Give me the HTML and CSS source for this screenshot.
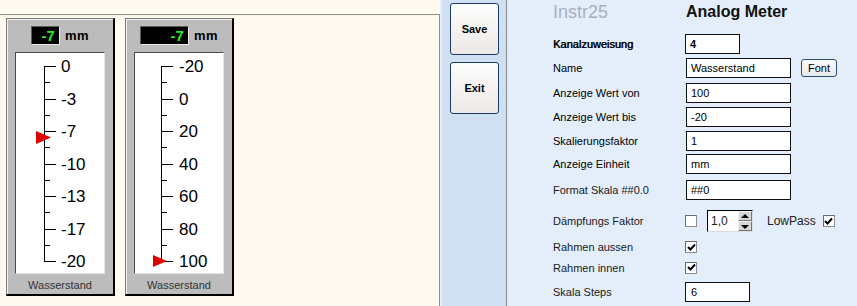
FILE: index.html
```html
<!DOCTYPE html>
<html lang="de">

<head>
    <meta charset="UTF-8">
    <title>Analog Meter</title>
    <link rel="stylesheet" href="styles.css">
</head>

<body>
    <div class="canvas">
        <div class="stage">
            <!-- Meter 1 -->
            <div class="meter">
                <div class="head">
                    <span class="display short">-7</span>
                    <span class="unit">mm</span>
                </div>
                <div class="scale">
                    <svg width="88" height="220" viewBox="0 0 88 220">
                        <g stroke="#000" stroke-width="1" shape-rendering="crispEdges">
                            <line x1="28" y1="13" x2="28" y2="208" />
                            <line x1="28" y1="13" x2="40" y2="13" />
                            <line x1="28" y1="29" x2="34" y2="29" />
                            <line x1="28" y1="46" x2="40" y2="46" />
                            <line x1="28" y1="62" x2="34" y2="62" />
                            <line x1="28" y1="78" x2="40" y2="78" />
                            <line x1="28" y1="94" x2="34" y2="94" />
                            <line x1="28" y1="111" x2="40" y2="111" />
                            <line x1="28" y1="127" x2="34" y2="127" />
                            <line x1="28" y1="143" x2="40" y2="143" />
                            <line x1="28" y1="159" x2="34" y2="159" />
                            <line x1="28" y1="176" x2="40" y2="176" />
                            <line x1="28" y1="192" x2="34" y2="192" />
                            <line x1="28" y1="208" x2="40" y2="208" />
                        </g>
                        <g class="lbl">
                            <text x="45" y="19">0</text>
                            <text x="45" y="52">-3</text>
                            <text x="45" y="84">-7</text>
                            <text x="45" y="117">-10</text>
                            <text x="45" y="149">-13</text>
                            <text x="45" y="182">-17</text>
                            <text x="45" y="214">-20</text>
                        </g>
                        <polygon points="20,78 20,91 35,84.5" fill="#e00000" />
                    </svg>
                </div>
                <div class="caption">Wasserstand</div>
            </div>

            <!-- Meter 2 -->
            <div class="meter">
                <div class="head">
                    <span class="display wide">-7</span>
                    <span class="unit">mm</span>
                </div>
                <div class="scale">
                    <svg width="88" height="220" viewBox="0 0 88 220">
                        <g stroke="#000" stroke-width="1" shape-rendering="crispEdges">
                            <line x1="26" y1="13" x2="26" y2="208" />
                            <line x1="26" y1="13" x2="38" y2="13" />
                            <line x1="26" y1="29" x2="32" y2="29" />
                            <line x1="26" y1="46" x2="38" y2="46" />
                            <line x1="26" y1="62" x2="32" y2="62" />
                            <line x1="26" y1="78" x2="38" y2="78" />
                            <line x1="26" y1="94" x2="32" y2="94" />
                            <line x1="26" y1="111" x2="38" y2="111" />
                            <line x1="26" y1="127" x2="32" y2="127" />
                            <line x1="26" y1="143" x2="38" y2="143" />
                            <line x1="26" y1="159" x2="32" y2="159" />
                            <line x1="26" y1="176" x2="38" y2="176" />
                            <line x1="26" y1="192" x2="32" y2="192" />
                            <line x1="26" y1="208" x2="38" y2="208" />
                        </g>
                        <g class="lbl">
                            <text x="44" y="19">-20</text>
                            <text x="44" y="52">0</text>
                            <text x="44" y="84">20</text>
                            <text x="44" y="117">40</text>
                            <text x="44" y="149">60</text>
                            <text x="44" y="182">80</text>
                            <text x="44" y="214">100</text>
                        </g>
                        <polygon points="18,202 18,214 32,208" fill="#e00000" />
                    </svg>
                </div>
                <div class="caption">Wasserstand</div>
            </div>
        </div>
    </div>

    <div class="sidebar">
        <button class="side-btn">Save</button>
        <button class="side-btn">Exit</button>
    </div>

    <div class="panel">
        <div class="row title-row">
            <span class="instr">Instr25</span>
            <span class="kind">Analog Meter</span>
        </div>
        <div class="row r-kanal">
            <label class="strong">Kanalzuweisung</label>
            <div class="field short-field bold">4</div>
        </div>
        <div class="row r-name">
            <label>Name</label>
            <div class="field">Wasserstand</div>
            <button class="font-btn">Font</button>
        </div>
        <div class="row r-von">
            <label>Anzeige Wert von</label>
            <div class="field">100</div>
        </div>
        <div class="row r-bis">
            <label>Anzeige Wert bis</label>
            <div class="field">-20</div>
        </div>
        <div class="row r-skal">
            <label>Skalierungsfaktor</label>
            <div class="field">1</div>
        </div>
        <div class="row r-einheit">
            <label>Anzeige Einheit</label>
            <div class="field">mm</div>
        </div>
        <div class="row r-format">
            <label class="light">Format Skala ##0.0</label>
            <div class="field">##0</div>
        </div>
        <div class="row r-daempf">
            <label class="light">Dämpfungs Faktor</label>
            <span class="check"></span>
            <div class="spinner">
                <span class="spin-val">1,0</span>
                <span class="spin-btns">
                    <span class="spin-up"></span>
                    <span class="spin-down"></span>
                </span>
            </div>
            <span class="lowpass">LowPass</span>
            <span class="check on">
                <svg width="9" height="9" viewBox="0 0 9 9"><path d="M1 4 L3.5 6.5 L8 1.5" fill="none" stroke="#000" stroke-width="2" /></svg>
            </span>
        </div>
        <div class="row r-aussen">
            <label class="light">Rahmen aussen</label>
            <span class="check on">
                <svg width="9" height="9" viewBox="0 0 9 9"><path d="M1 4 L3.5 6.5 L8 1.5" fill="none" stroke="#000" stroke-width="2" /></svg>
            </span>
        </div>
        <div class="row r-innen">
            <label class="light">Rahmen innen</label>
            <span class="check on">
                <svg width="9" height="9" viewBox="0 0 9 9"><path d="M1 4 L3.5 6.5 L8 1.5" fill="none" stroke="#000" stroke-width="2" /></svg>
            </span>
        </div>
        <div class="row r-steps">
            <label class="light">Skala Steps</label>
            <div class="field steps-field">6</div>
        </div>
    </div>
</body>

</html>
```

FILE: styles.css
```css
body {
    margin: 0;
    width: 857px;
    height: 306px;
    overflow: hidden;
    display: flex;
    font-family: "Liberation Sans", Arial, sans-serif;
    font-size: 11px;
    color: #000;
}

/* left drawing area */
.canvas {
    width: 440px;
    padding-top: 14px;
    background: #fffaf0;
    border-right: 2px solid #e6eef8;
}

.stage {
    height: 291px;
    border-top: 1px solid #8c8c8c;
    border-right: 1px solid #8c8c8c;
    display: flex;
    gap: 10px;
    padding: 3px 0 0 6px;
}

.meter {
    width: 106px;
    height: 275px;
    background: #bcbcbc;
    border: 1px solid #7a7a7a;
    border-right: 2px solid #000;
    border-bottom: 2px solid #000;
    box-shadow: inset 1px 1px 0 #f2f2f2;
    display: flex;
    flex-direction: column;
    align-items: center;
}

.head {
    display: flex;
    align-items: center;
    gap: 5px;
    margin-top: 7px;
    height: 19px;
}

.display {
    height: 19px;
    box-sizing: border-box;
    background: #000;
    border: 1px solid #5c5c5c;
    border-right-color: #e8e8e8;
    border-bottom-color: #e8e8e8;
    color: #2ee82e;
    font-size: 15px;
    font-weight: bold;
    line-height: 17px;
    text-align: right;
    padding-right: 4px;
}

.short {
    width: 29px;
}

.wide {
    width: 49px;
}

.unit {
    font-size: 13px;
    font-weight: bold;
    letter-spacing: 0.5px;
}

.scale {
    width: 88px;
    height: 220px;
    margin-top: 7px;
    background: #fff;
    border: 1px solid #4a4a4a;
    border-right-color: #e4e4e4;
    border-bottom-color: #e4e4e4;
}

.scale svg {
    display: block;
}

.lbl text {
    font-family: "Liberation Sans", Arial, sans-serif;
    font-size: 17px;
    fill: #000;
}

.caption {
    margin-top: 5px;
    color: #333;
    font-size: 11px;
}

/* button column */
.sidebar {
    width: 65px;
    background: #cfe0f2;
    border-right: 1px solid #8a8a8a;
    display: flex;
    flex-direction: column;
    gap: 7px;
    padding: 3px 0 0 8px;
    box-sizing: border-box;
}

.side-btn {
    width: 49px;
    height: 52px;
    border: 1px solid #1e3a66;
    border-radius: 3px;
    background: linear-gradient(#fdfdfd, #ece9e6);
    font-family: "Liberation Sans", Arial, sans-serif;
    font-size: 11px;
    font-weight: bold;
    color: #000;
    padding: 0;
}

/* property panel */
.panel {
    flex: 1;
    background: #e3eefa;
    padding-left: 46px;
}

.row {
    display: flex;
    align-items: center;
}

.row label {
    width: 132px;
    flex: none;
}

.row .strong {
    text-shadow: 0.5px 0 0 #000;
}

.row .light {
    color: #1a1a1a;
}

.title-row {
    height: 24px;
    margin-bottom: 7px;
}

.instr {
    width: 133px;
    font-size: 18px;
    color: #a7b0bd;
}

.kind {
    font-size: 16px;
    font-weight: bold;
    color: #111;
}

.r-kanal { height: 25px; }
.r-name { height: 24px; }
.r-von { height: 25px; }
.r-bis { height: 24px; }
.r-skal { height: 24px; }
.r-einheit { height: 22px; }
.r-format { height: 30px; }
.r-daempf { height: 32px; }
.r-aussen { height: 20px; }
.r-innen { height: 21px; }
.r-steps { height: 28px; }

.field {
    width: 105px;
    height: 20px;
    box-sizing: border-box;
    margin-left: 1px;
    background: #fff;
    border: 1px solid #111;
    padding-left: 4px;
    line-height: 18px;
    font-size: 11px;
}

.short-field {
    width: 55px;
    margin-left: 0;
}

.bold {
    font-weight: bold;
}

.steps-field {
    width: 65px;
    margin-left: 0;
    padding-left: 5px;
}

.font-btn {
    margin-left: 10px;
    width: 36px;
    height: 18px;
    padding: 0;
    border: 1px solid #2a4d80;
    border-radius: 3px;
    background: linear-gradient(#fafafa, #e8e8e8);
    font-family: "Liberation Sans", Arial, sans-serif;
    font-size: 11px;
    color: #000;
}

.check {
    width: 12px;
    height: 12px;
    box-sizing: border-box;
    background: #fff;
    border: 1px solid #8e8e8e;
    border-top-color: #6a6a6a;
    border-left-color: #6a6a6a;
    display: flex;
    align-items: center;
    justify-content: center;
}

.spinner {
    margin-left: 10px;
    width: 46px;
    height: 22px;
    box-sizing: border-box;
    background: #fff;
    border: 1px solid #000;
    border-right-color: #dcdcdc;
    border-bottom-color: #dcdcdc;
    display: flex;
    justify-content: space-between;
}

.spin-val {
    padding: 3px 0 0 3px;
    font-size: 12px;
    color: #222;
}

.spin-btns {
    width: 14px;
    display: flex;
    flex-direction: column;
}

.spin-up,
.spin-down {
    flex: 1;
    background: #d8d6d2;
    border: 1px solid #f4f4f4;
    border-right-color: #777;
    border-bottom-color: #777;
    position: relative;
}

.spin-up::after,
.spin-down::after {
    content: "";
    position: absolute;
    left: 2px;
    border-left: 4px solid transparent;
    border-right: 4px solid transparent;
}

.spin-up::after {
    top: 2px;
    border-bottom: 4px solid #000;
}

.spin-down::after {
    top: 3px;
    border-top: 4px solid #000;
}

.lowpass {
    margin-left: 14px;
    margin-right: 7px;
    color: #222;
    font-size: 12px;
}
```
